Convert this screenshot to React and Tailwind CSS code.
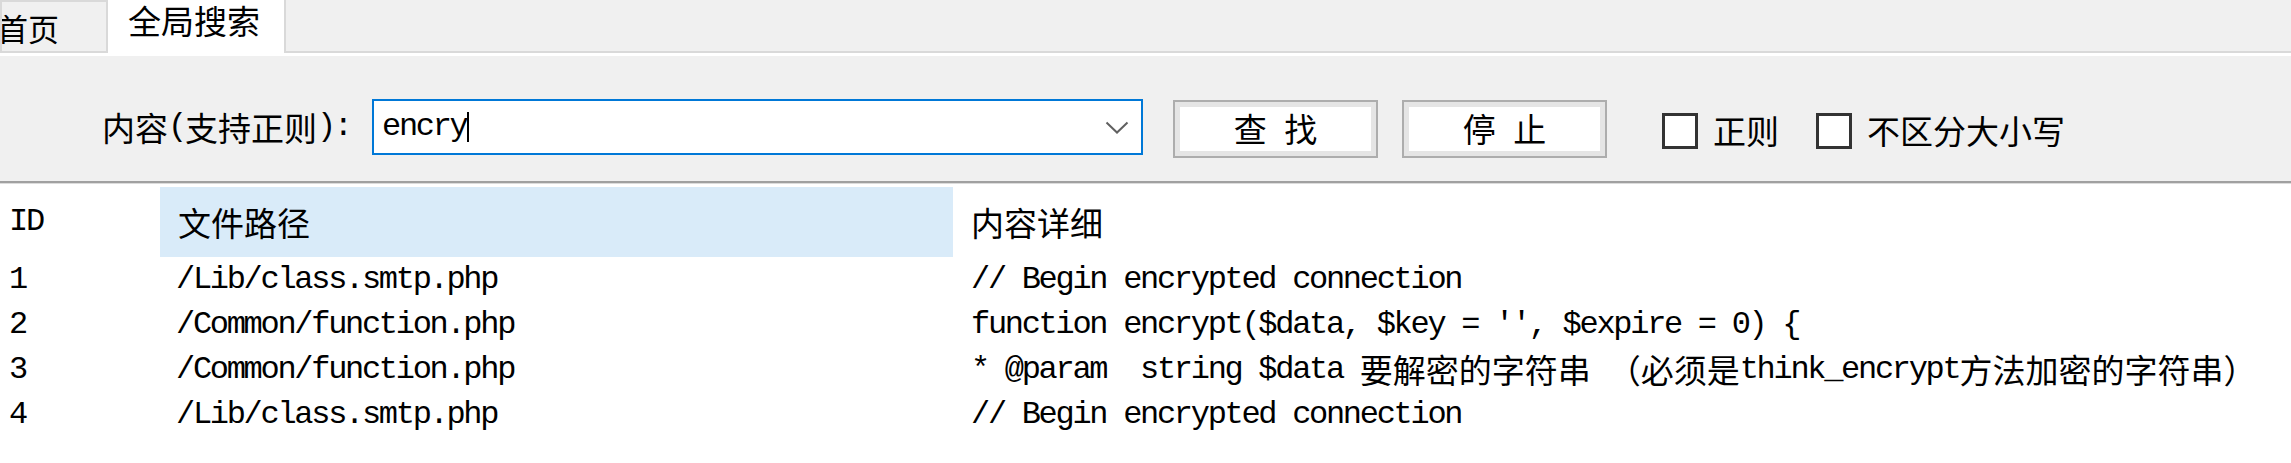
import React from 'react';

const CJK = /([\u2e80-\u9fff\uff00-\uffef]+)/;

// SimSun-like mixed text: half-width ascii in mono, CJK runs at full width
function Mixed({ text }) {
  return text
    .split(CJK)
    .filter((part) => part !== '')
    .map((part, i) =>
      CJK.test(part) ? (
        <span key={i} className="font-['Noto_Sans_CJK_SC',sans-serif] text-[33px] leading-[1.3] tracking-normal">
          {part}
        </span>
      ) : (
        <span key={i} className="font-['Liberation_Mono',monospace] text-[32px] leading-[1.3] tracking-[-2.3px]">
          {part}
        </span>
      )
    );
}

const rows = [
  { id: '1', path: '/Lib/class.smtp.php', detail: '// Begin encrypted connection' },
  { id: '2', path: '/Common/function.php', detail: "function encrypt($data, $key = '', $expire = 0) {" },
  {
    id: '3',
    path: '/Common/function.php',
    detail: '* @param  string $data 要解密的字符串 （必须是think_encrypt方法加密的字符串）',
  },
  { id: '4', path: '/Lib/class.smtp.php', detail: '// Begin encrypted connection' },
];

function Button({ label }) {
  return (
    <div className="mt-[1px] w-[205px] h-[58px] border-2 border-[#adadad] bg-[#e5e5e5] p-[5px]">
      <div className="w-full h-full bg-white flex items-center justify-center text-[33px] leading-[1.2] [word-spacing:10px] whitespace-pre">
        {label}
      </div>
    </div>
  );
}

function Check({ label }) {
  return (
    <div className="mt-[14px] flex items-center h-[36px]">
      <div className="w-[36px] h-[36px] border-[3px] border-[#333333] bg-white" />
      <span className="ml-[15px] text-[33px] leading-[1.2]">{label}</span>
    </div>
  );
}

export default function App() {
  return (
    <div className="w-[2291px] h-[463px] overflow-hidden bg-white text-black font-['Noto_Sans_CJK_SC',sans-serif]">
      {/* tab strip */}
      <div className="flex items-start h-[53px] bg-[#f0f0f0]">
        <div className="w-[108px] h-[53px] border-2 border-[#d9d9d9] flex items-center overflow-hidden">
          <span className="-ml-[5px] mt-[3px] text-[31px] leading-[1.2] whitespace-nowrap">首页</span>
        </div>
        <div className="relative z-10 w-[176px] h-[56px] bg-white pl-[20px] pt-[1px]">
          <span className="text-[33px] leading-[1.2] whitespace-nowrap">全局搜索</span>
        </div>
        <div className="flex-1 h-[53px] border-l-2 border-b-2 border-[#d9d9d9]" />
      </div>
      <div className="h-[3px] bg-white" />

      {/* search panel */}
      <div className="h-[125px] bg-[#f0f0f0] flex items-start pt-[43px] pl-[102px]">
        <div className="w-[270px] h-[56px] flex items-center whitespace-pre">
          <Mixed text="内容(支持正则):" />
        </div>
        <div className="w-[771px] h-[56px] border-2 border-[#0078d7] bg-white flex items-center pl-[8px] pr-[12px]">
          <div className="flex-1 flex items-center">
            <Mixed text="encry" />
            <span className="inline-block w-[2px] h-[30px] bg-black" />
          </div>
          <svg width="24" height="13" viewBox="0 0 24 13" fill="none">
            <path d="M1.5 1.5 L12 11.5 L22.5 1.5" stroke="#606060" strokeWidth="2" />
          </svg>
        </div>
        <div className="ml-[30px]">
          <Button label="查 找" />
        </div>
        <div className="ml-[24px]">
          <Button label="停 止" />
        </div>
        <div className="ml-[55px]">
          <Check label="正则" />
        </div>
        <div className="ml-[37px]">
          <Check label="不区分大小写" />
        </div>
      </div>
      <div className="h-[2px] bg-[#a0a0a0]" />
      <div className="h-[1px] bg-[#dcdcdc]" />

      {/* result list */}
      <div className="mt-[3px]">
        <div className="grid grid-cols-[160px_793px_1fr] h-[70px]">
          <div className="flex items-center pl-[9px]">
            <Mixed text="ID" />
          </div>
          <div className="flex items-center pl-[18px] bg-[#d9ebf9]">
            <Mixed text="文件路径" />
          </div>
          <div className="flex items-center pl-[18px]">
            <Mixed text="内容详细" />
          </div>
        </div>
        {rows.map((r) => (
          <div key={r.id} className="grid grid-cols-[160px_793px_1fr] h-[45px] whitespace-pre">
            <div className="flex items-center pl-[9px]">
              <Mixed text={r.id} />
            </div>
            <div className="flex items-center pl-[16px]">
              <Mixed text={r.path} />
            </div>
            <div className="flex items-center pl-[18px]">
              <Mixed text={r.detail} />
            </div>
          </div>
        ))}
      </div>
    </div>
  );
}
